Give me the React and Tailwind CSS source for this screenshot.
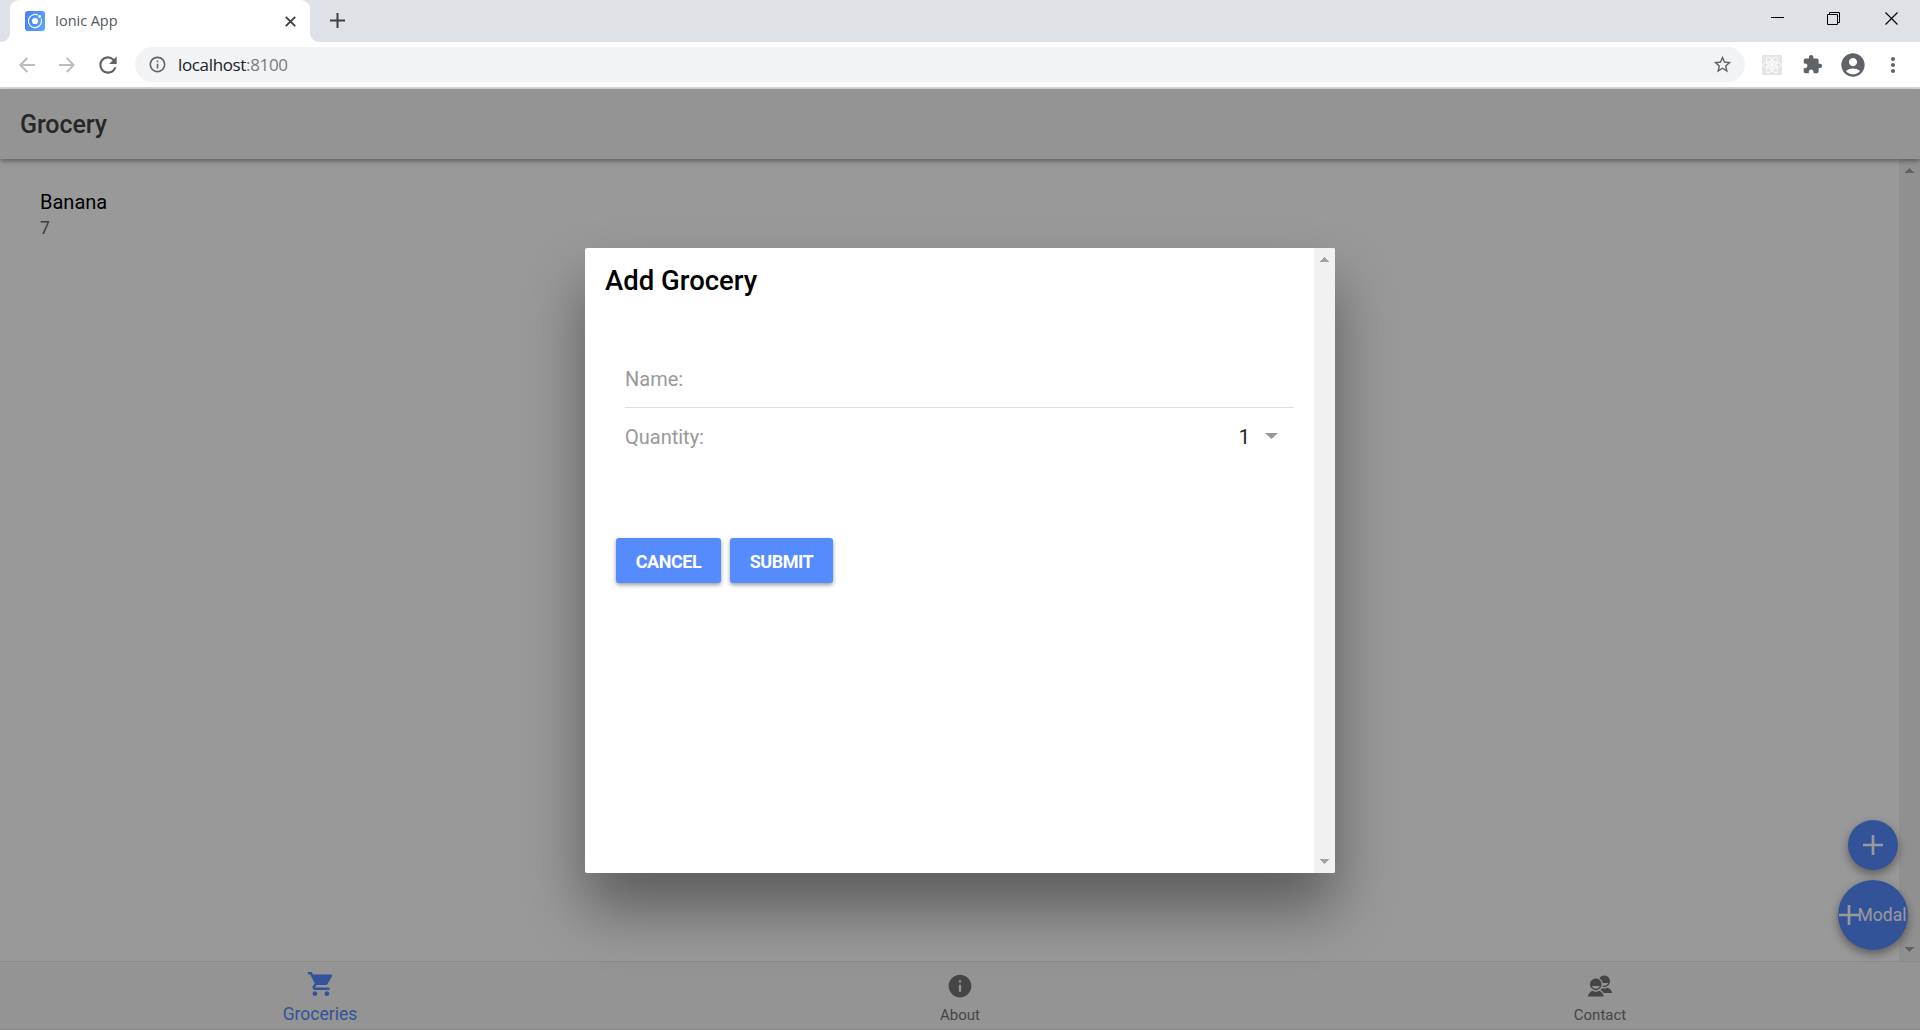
import React from "react";
import { IoMdCart, IoMdInformationCircle, IoMdContacts, IoMdAdd } from "react-icons/io";
import { MdExtension, MdAccountCircle, MdStarBorder, MdMoreVert, MdRefresh, MdInfoOutline } from "react-icons/md";

function IonicLogo() {
  return (
    <svg viewBox="0 0 20 20" className="size-5 shrink-0">
      <defs>
        <linearGradient id="g" x1="0" y1="0.3" x2="1" y2="0.7">
          <stop offset="0" stopColor="#4581fb" />
          <stop offset="1" stopColor="#5ba3fb" />
        </linearGradient>
      </defs>
      <rect width="20" height="20" rx="3" fill="url(#g)" />
      <circle cx="10" cy="10" r="3.1" fill="#fff" />
      <path d="M12.9 4.1A6.6 6.6 0 1 0 16.1 7.5" fill="none" stroke="#fff" strokeWidth="1.1" />
      <circle cx="14.7" cy="5.5" r="1.4" fill="#fff" />
    </svg>
  );
}

function AtomIcon() {
  return (
    <svg viewBox="0 0 20 20" className="size-5" fill="none" stroke="#fff" strokeWidth="0.9">
      <rect width="20" height="20" rx="1" fill="#e4e4e4" stroke="none" />
      <ellipse cx="10" cy="10" rx="9" ry="3.4" />
      <ellipse cx="10" cy="10" rx="9" ry="3.4" transform="rotate(60 10 10)" />
      <ellipse cx="10" cy="10" rx="9" ry="3.4" transform="rotate(120 10 10)" />
      <circle cx="10" cy="10" r="1.8" fill="#fff" />
    </svg>
  );
}

function ArrowUp({ className }) {
  return (
    <svg viewBox="0 0 9 5" className={className} fill="currentColor" shapeRendering="crispEdges">
      <path d="M4.5 0L9 5H0z" />
    </svg>
  );
}

function ArrowDown({ className }) {
  return (
    <svg viewBox="0 0 9 5" className={className} fill="currentColor" shapeRendering="crispEdges">
      <path d="M0 0H9L4.5 5z" />
    </svg>
  );
}

function TabStrip() {
  return (
    <div className="flex h-[42px] shrink-0 bg-[#dee1e6]">
      <div className="h-full w-[10px] bg-white">
        <div className="h-full rounded-br-[9px] bg-[#dee1e6]" />
      </div>
      <div className="flex h-full w-[300px] items-center rounded-t-[9px] bg-white pl-[15px] pr-[14px]">
        <IonicLogo />
        <span className="ml-[10px] flex-1 font-['Open_Sans'] text-[14.5px] tracking-[-0.05px] text-[#55595d]">Ionic App</span>
        <svg viewBox="0 0 11 11" className="size-[11px]" stroke="#3c4043" strokeWidth="1.9">
          <path d="M0.800 0.800L10.200 10.200M10.200 0.800L0.800 10.200" />
        </svg>
      </div>
      <div className="h-full w-[10px] bg-white">
        <div className="h-full rounded-bl-[9px] bg-[#dee1e6]" />
      </div>
      <svg viewBox="0 0 15 15" className="ml-[10px] mt-[13px] size-[15px]" stroke="#3c4043" strokeWidth="2">
        <path d="M7.500 0V15M0 7.500H15" />
      </svg>
      <svg viewBox="0 0 128 13" className="ml-auto mr-[21px] mt-3 h-[13px] w-[128px]" fill="none" stroke="#000">
        <path d="M0 5.5H13" />
        <path d="M56.500 2.500H66.500V12.500H56.500ZM58.500 2.500V0.500H68.500V10.500H66.500" />
        <path d="M114.500 0.500L126.500 12.500M126.500 0.500L114.500 12.500" strokeWidth="1.1" />
      </svg>
    </div>
  );
}

function AddressBar() {
  return (
    <div className="flex h-[47px] shrink-0 items-center border-b-2 border-[#dadce0] bg-white text-[#5f6368]">
      <svg viewBox="0 0 16 16" className="ml-[19px] size-4" fill="none" stroke="#babcbe" strokeWidth="1.9">
        <path d="M16 8H1.500M8.300 1L1.300 8L8.300 15" />
      </svg>
      <svg viewBox="0 0 16 16" className="ml-[24px] size-4" fill="none" stroke="#babcbe" strokeWidth="1.9">
        <path d="M0 8H14.500M7.700 1L14.700 8L7.700 15" />
      </svg>
      <MdRefresh className="ml-[20px] size-[26px]" />
      <div className="ml-[14px] flex h-[35px] w-[1610px] items-center rounded-full bg-[#f1f3f4] pl-[13px] pr-[12px]">
        <MdInfoOutline className="size-[19px]" />
        <span className="ml-[11px] flex-1 font-['Open_Sans'] text-[17px] tracking-[-0.35px] text-[#202124]">
          localhost<span className="text-[#787c80]">:8100</span>
        </span>
        <MdStarBorder className="size-[21px]" />
      </div>
      <div className="ml-[17px]"><AtomIcon /></div>
      <MdExtension className="ml-[20px] size-[21px]" />
      <MdAccountCircle className="ml-[16px] size-[28px]" />
      <MdMoreVert className="ml-[14px] size-[24px]" />
    </div>
  );
}

function Tab({ icon, label, active }) {
  return (
    <div className={active ? "flex flex-1 flex-col items-center pt-[7px] text-[#5789ff]" : "flex flex-1 flex-col items-center pt-[10px] text-[#737373]"}>
      {icon}
      <span className={active ? "mt-[3px] text-[17.5px] leading-6" : "mt-[3px] text-[15px] leading-6"}>{label}</span>
    </div>
  );
}

function Modal() {
  return (
    <div className="flex h-[625px] w-[750px] overflow-hidden rounded-[2px] bg-white shadow-[0_35px_60px_rgba(0,0,0,0.4)]">
      <div className="flex-1 px-5 pt-[17px]">
        <h1 className="text-[27.5px] font-medium leading-8 text-black">Add Grocery</h1>
        <div className="mt-[51px] ml-5 text-[20px] text-[#999]">
          <div className="flex h-[60px] items-center border-b border-[#dedede] pt-[3px]">Name:</div>
          <div className="flex h-[58px] items-center pr-4">
            <span className="flex-1">Quantity:</span>
            <span className="text-[#222]">1</span>
            <svg viewBox="0 0 13 6" className="ml-[15px] mb-[2px] h-[6px] w-[13px]" fill="#999">
              <path d="M0 0H13L6.500 6z" />
            </svg>
          </div>
        </div>
        <div className="mt-[72px] ml-[11px] flex gap-[9px] text-[18px] font-bold tracking-[-0.45px] text-white">
          <button className="h-[45px] w-[105px] rounded-[3px] bg-[#568aff] pt-[2px] shadow-[0_2px_4px_rgba(0,0,0,0.4)]">CANCEL</button>
          <button className="h-[45px] w-[103px] rounded-[3px] bg-[#568aff] pt-[2px] shadow-[0_2px_4px_rgba(0,0,0,0.4)]">SUBMIT</button>
        </div>
      </div>
      <div className="flex w-[21px] flex-col items-center justify-between bg-[#f1f1f1] py-[9px] text-[#a3a3a3]">
        <ArrowUp className="h-[5px] w-[9px]" />
        <ArrowDown className="h-[5px] w-[9px]" />
      </div>
    </div>
  );
}

export default function App() {
  return (
    <div className="flex h-[1030px] w-[1920px] flex-col overflow-hidden">
      <TabStrip />
      <AddressBar />
      <div className="relative flex flex-1 flex-col font-[Roboto]">
        <header className="z-10 flex h-[70px] shrink-0 items-center bg-[#f7f7f7] pl-5 pt-[2px] text-[25px] font-medium tracking-[-0.1px] text-[#424242] shadow-[0_2px_5px_rgba(0,0,0,0.4)]">
          Grocery
        </header>
        <main className="relative flex flex-1 bg-white">
          <div className="flex-1 pl-10 pt-[31px]">
            <h2 className="text-[20px] leading-6 text-black">Banana</h2>
            <p className="text-[17.5px] leading-[29px] text-[#666]">7</p>
          </div>
          <div className="flex w-[21px] flex-col items-center justify-between bg-[#f1f1f1] py-[9px] text-[#a3a3a3]">
            <ArrowUp className="h-[5px] w-[9px]" />
            <ArrowDown className="h-[5px] w-[9px]" />
          </div>
          <div className="absolute bottom-[11px] right-3 flex flex-col items-center gap-[10px] text-white">
            <div className="flex size-[50px] items-center justify-center rounded-full bg-[#568aff] shadow-[0_4px_10px_rgba(0,0,0,0.4)]">
              <IoMdAdd className="size-8" />
            </div>
            <div className="flex size-[70px] items-center justify-center rounded-full bg-[#568aff] text-[17.5px] shadow-[0_4px_10px_rgba(0,0,0,0.4)]">
              <IoMdAdd className="-ml-[7px] -mr-[7px] size-8 shrink-0" />
              Modal
            </div>
          </div>
        </main>
        <footer className="flex h-[69px] shrink-0 border-y border-t-[#e6e6e6] border-b-[#dedede] bg-[#f7f7f7]">
          <Tab active label="Groceries" icon={<IoMdCart className="size-[30px]" />} />
          <Tab label="About" icon={<IoMdInformationCircle className="size-[28px]" />} />
          <Tab label="Contact" icon={<IoMdContacts className="size-[28px]" />} />
        </footer>
        <div className="absolute inset-0 z-20 flex items-center justify-center bg-black/40 pt-[1px]">
          <Modal />
        </div>
      </div>
    </div>
  );
}
